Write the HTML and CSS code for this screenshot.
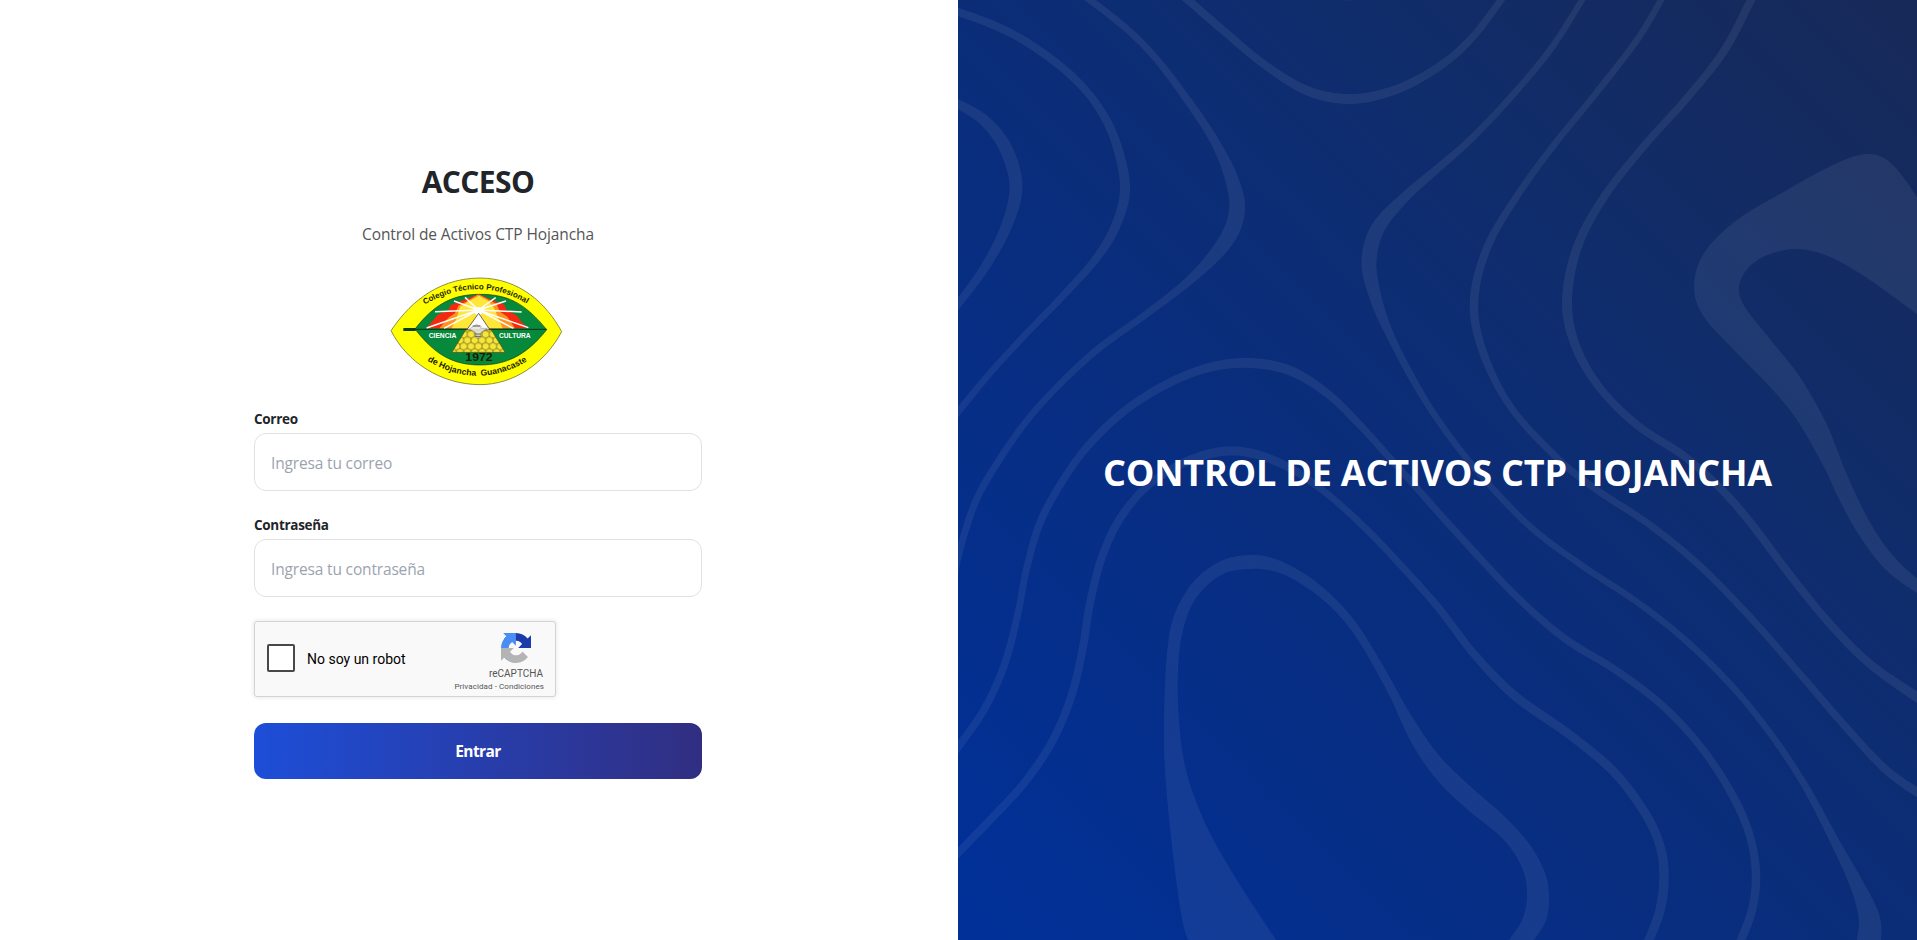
FILE: index.html
```html
<!DOCTYPE html>
<html lang="es">
<head>
<meta charset="utf-8">
<title>Acceso</title>
<link rel="stylesheet" href="styles.css">
</head>
<body>
<main class="page">
  <section class="access">
    <form class="form">
      <h1 class="form-title">ACCESO</h1>
      <p class="form-subtitle">Control de Activos CTP Hojancha</p>
      <svg class="crest" viewBox="0 0 570 390" role="img" aria-label="Colegio Técnico Profesional de Hojancha">
        <defs>
          <path id="arc-top" d="M134 119Q290 29 437 114L470 134"/>
          <path id="arc-bottom" d="M142 287Q292 377 440 289L470 270"/>
          <pattern id="comb" width="22" height="36" patternUnits="userSpaceOnUse" x="218" y="190">
            <rect width="22" height="36" fill="#f6e53a"/>
            <path d="M11 0V6L0 12V24L11 30V36M11 6L22 12V24L11 30" fill="none" stroke="#5c5310" stroke-width="2"/>
          </pattern>
          <clipPath id="leaf"><path d="M105 192C165 115 220 88 300 88C385 88 435 115 500 194C440 270 380 300 300 300C220 300 165 270 105 192Z"/></clipPath>
        </defs>
        <path d="M33 197C78 130 160 40 300 39C420 40 500 117 545 200C495 295 400 359 300 359C180 358 80 290 33 197Z" fill="#ffff00" stroke="#55552a" stroke-width="2"/>
        <path d="M105 192C165 115 220 88 300 88C385 88 435 115 500 194C440 270 380 300 300 300C220 300 165 270 105 192Z" fill="#07893b" stroke="#123d16" stroke-width="2"/>
        <g clip-path="url(#leaf)">
          <path d="M138 190L165 160 172 150 205 135 212 120 250 105 295 88 345 108 372 118 380 135 412 152 422 168 445 190Z" fill="#f42a10"/>
          <path d="M178 190L205 158 225 145 235 122 262 108 295 88 330 106 350 118 360 140 382 155 405 190Z" fill="#ff9420"/>
          <path d="M215 190L230 160 240 125 268 108 297 92 325 108 342 128 355 160 368 190Z" fill="#ffe73a"/>
        </g>
        <path d="M295 135L165 140M295 135L140 189M295 135L192 190M295 135L222 108M295 135L255 97M295 135L347 98M295 135L378 108M295 135L425 141M295 135L445 188M295 135L400 190" stroke="#fff" stroke-width="4.5"/>
        <circle cx="295" cy="138" r="12" fill="#fff"/>
        <path d="M70 189H107V198H70Z" fill="#063f1d"/>
        <path d="M105 193H500" stroke="#082f16" stroke-width="3"/>
        <path d="M296 145L330 195H260Z" fill="#fff" stroke="#222" stroke-width="2"/>
        <path d="M257 195H334L375 262H216Z" fill="url(#comb)" stroke="#594f10" stroke-width="2"/>
        <path d="M282 183Q290 174 297 183Q305 178 302 190L322 190 304 201 300 218H289L286 202L268 192Z" fill="#e4e4e0" fill-opacity=".85" stroke="#888" stroke-width="1.5"/>
        <path d="M278 183H300M284 207H303M286 214H302" stroke="#444" stroke-width="2.5"/>
        <g class="crest-text">
          <text font-size="19" fill="#fff" x="146" y="218" textLength="83" lengthAdjust="spacingAndGlyphs">CIENCIA</text>
          <text font-size="19" fill="#fff" x="357" y="218" textLength="95" lengthAdjust="spacingAndGlyphs">CULTURA</text>
          <text font-size="30" x="256" y="287" textLength="82" lengthAdjust="spacingAndGlyphs">1972</text>
          <text font-size="24"><textPath href="#arc-top">Colegio Técnico Profesional</textPath></text>
          <text font-size="26"><textPath href="#arc-bottom" xml:space="preserve">de Hojancha  Guanacaste</textPath></text>
        </g>
      </svg>
      <label class="label" for="email">Correo</label>
      <input class="input" id="email" type="email" placeholder="Ingresa tu correo">
      <label class="label label-second" for="password">Contraseña</label>
      <input class="input" id="password" type="password" placeholder="Ingresa tu contraseña">
      <div class="captcha">
        <span class="captcha-box"></span>
        <span class="captcha-label">No soy un robot</span>
        <div class="captcha-brand">
          <svg class="captcha-logo" viewBox="0 0 64 64">
            <path fill="#1c3aa9" d="M64 31.955l-.033-1.37V4.687l-7.16 7.16C50.948 4.674 42.033.093 32.05.093c-10.4 0-19.622 4.96-25.458 12.64l11.736 11.86a15.55 15.55 0 0 1 4.754-5.334c2.05-1.6 4.952-2.906 8.968-2.906.485 0 .86.057 1.135.163 4.976.393 9.288 3.14 11.828 7.124l-8.307 8.307L64 31.953"/>
            <path fill="#4a8df5" d="M31.862.094l-1.37.033H4.594l7.16 7.16C4.58 13.147 0 22.06 0 32.046c0 10.4 4.96 19.622 12.64 25.458L24.5 45.768a15.55 15.55 0 0 1-5.334-4.754c-1.6-2.05-2.906-4.952-2.906-8.968 0-.485.057-.86.163-1.135.393-4.976 3.14-9.288 7.124-11.828l8.307 8.307L31.86.095"/>
            <path fill="#b4b4b4" d="M.001 32.045l.033 1.37v25.898l7.16-7.16c5.86 7.173 14.774 11.754 24.76 11.754 10.4 0 19.622-4.96 25.458-12.64l-11.736-11.86a15.55 15.55 0 0 1-4.754 5.334c-2.05 1.6-4.952 2.906-8.968 2.906-.485 0-.86-.057-1.135-.163-4.976-.393-9.288-3.14-11.828-7.124l8.307-8.307-31.297.016"/>
          </svg>
          <span class="captcha-name">reCAPTCHA</span>
          <span class="captcha-links">Privacidad - Condiciones</span>
        </div>
      </div>
      <button class="submit" type="button">Entrar</button>
    </form>
  </section>
  <section class="hero">
    <svg class="contours" id="contours" viewBox="0 0 959 940" preserveAspectRatio="none" aria-hidden="true"></svg>
    <h2 class="hero-title">CONTROL DE ACTIVOS CTP HOJANCHA</h2>
  </section>
</main>
<script src="contours.js"></script>
</body>
</html>
```

FILE: styles.css
```css
* { box-sizing: border-box; }

body {
  margin: 0;
  font-family: "Open Sans", "Noto Sans", sans-serif;
  color: #212529;
  background: #fff;
}

.page {
  display: grid;
  grid-template-columns: 958px 1fr;
  height: 940px;
  overflow: hidden;
}

.access {
  display: flex;
  justify-content: center;
}

.form {
  display: flex;
  flex-direction: column;
  width: 448px;
  margin-right: 2px;
  padding-top: 158px;
}

.form-title {
  margin: 0;
  font-size: 30px;
  font-weight: 700;
  line-height: 48px;
  letter-spacing: -0.6px;
  text-align: center;
}

.form-subtitle {
  margin: 16px 0 0;
  font-size: 15.5px;
  line-height: 25px;
  letter-spacing: -0.1px;
  text-align: center;
  color: #555;
}

.crest {
  display: block;
  width: 190px;
  height: 130px;
  margin: 18px 0 0 126px;
}

.crest-text {
  font-family: "Liberation Sans", Arial, sans-serif;
  font-weight: 700;
  fill: #1c1c00;
}

.label {
  margin-top: 14px;
  font-size: 13.5px;
  font-weight: 700;
  line-height: 20px;
  letter-spacing: -0.3px;
}

.label-second { margin-top: 24px; }

.input {
  width: 100%;
  height: 58px;
  margin: 4px 0 0;
  padding: 1px 16px 0;
  border: 1px solid #dfe1e6;
  border-radius: 12px;
  font: inherit;
  font-size: 15.5px;
  letter-spacing: -0.16px;
  background: #fff;
}

.input::placeholder {
  color: #9ca3af;
  opacity: 1;
}

.captcha {
  display: flex;
  align-items: center;
  width: 302px;
  height: 76px;
  margin-top: 24px;
  padding-left: 12px;
  border: 1px solid #d3d3d3;
  border-radius: 3px;
  background: #f9f9f9;
  box-shadow: 0 0 4px 1px rgba(0, 0, 0, 0.08);
  font-family: Roboto, sans-serif;
}

.captcha-box {
  width: 28px;
  height: 28px;
  margin-bottom: 2px;
  border: 2px solid #484848;
  border-radius: 2px;
  background: #fff;
}

.captcha-label {
  flex: 1;
  margin-left: 12px;
  font-size: 14px;
  line-height: 17px;
  color: #000;
}

.captcha-brand {
  display: flex;
  flex-direction: column;
  align-items: flex-end;
  width: 100px;
  height: 74px;
  padding: 11px 11px 0 0;
  color: #555;
}

.captcha-logo {
  width: 30px;
  height: 30px;
  margin-right: 13px;
}

.captcha-name {
  margin: 5px 1px 0 0;
  font-size: 10px;
  line-height: 12px;
}

.captcha-links {
  margin-top: 2px;
  font-size: 8px;
  line-height: 10px;
  letter-spacing: 0.08px;
  white-space: nowrap;
}

.submit {
  width: 100%;
  height: 56px;
  margin-top: 26px;
  border: 0;
  border-radius: 12px;
  font: inherit;
  font-size: 15.5px;
  font-weight: 700;
  letter-spacing: -0.6px;
  color: #fff;
  background: linear-gradient(to right, #1d4ed8, #312e81);
}

.hero {
  position: relative;
  display: flex;
  align-items: center;
  justify-content: center;
  background: linear-gradient(45deg, #003099 0%, #0b2d78 50%, #112c67 75%, #172958 100%);
}

.contours {
  position: absolute;
  inset: 0;
  width: 100%;
  height: 100%;
  fill: #fff;
  fill-opacity: 0.065;
}

.hero-title {
  position: relative;
  margin: 6px 0 0;
  font-size: 36px;
  font-weight: 700;
  line-height: 54px;
  letter-spacing: -0.2px;
  white-space: nowrap;
  color: #fff;
}
```

FILE: contours.js
```js
// Contour lines: centre points with a band width, [x, y, width].
const bands = [
  [[-20,6,8],[0,12,8],[33,24,8],[67,41,8],[107,70,8],[137,102,8],[157,140,9],[167,187,10],[158,225,9.5],[137,260,8],[100,301,7],[67,335,6.5],[33,372,6.5],[0,412,7],[-15,432,7]],
  [[-15,97,8],[0,104,9],[27,121,11],[48,149,13],[58,187,13],[48,227,11],[27,267,9],[0,304,8],[-15,322,8]],
  [[110,-15,7],[132,0,7],[170,30,7],[200,61,7],[233,105,8],[257,142,9],[273,177,13],[279,210,16],[267,242,15],[233,279,9],[187,315,7],[140,349,7],[100,386,6.5],[67,423,6.5],[38,465,7],[17,503,7],[1,553,7],[-6,590,7]],
  [[215,-12,8],[230,0,8],[267,32,8],[307,65,8],[350,91,9.5],[393,99,10],[437,90,9],[479,68,8],[512,40,7.5],[543,0,7],[552,-15,7]],
  [[370,-8,8],[390,-3.5,8],[410,-8,8]],
  [[632,-14,6],[624,0,6],[592,50,6.5],[552,98,6.5],[512,140,7],[479,169,8],[447,197,10],[420,228,14],[411,262,15],[418,299,12],[433,337,8],[457,383,7],[480,420,6.5],[506,455,6.5],[536,490,6.5],[576,530,6.5],[626,567,6.5],[679,602,6.5],[726,639,6.5],[772,684,6.5],[812,733,6.5],[846,784,7],[876,840,9],[899,885,14],[911,917,21],[911,940,24],[908,965,25]],
  [[711,-15,6.5],[703,0,6.5],[679,40,6.5],[639,92,6.5],[596,145,6.5],[559,196,7],[529,248,8],[516,302,8.5],[525,352,8],[552,406,7],[596,455,7],[636,488,7],[692,525,7],[742,566,7],[792,617,7],[842,674,7],[886,725,7.5],[926,768,8],[959,792,9],[980,802,9]],
  [[801,-15,8],[793,0,8],[766,51,8],[729,98,7.5],[686,146,7.5],[646,197,8],[619,248,9],[609,302,10],[618,347,9],[642,388,8],[679,425,8],[726,456,8],[762,488,8],[792,522,8],[832,575,8],[872,624,8],[912,664,8.5],[959,697,10],[980,708,10]],
  [[-15,868,9],[0,853,8],[33,819,8],[67,782,8],[95,740,8],[114,694,8],[125,647,8],[132,603,8],[144,557,8],[163,517,8],[193,483,8],[235,459,9],[278,451,9],[322,463,8.5],[363,489,7],[403,524,7],[437,559,7],[479,606,7.5],[516,654,8],[557,696,9],[612,735,9],[656,772,9],[687,813,9],[702,846,9],[706,877,9.5],[702,910,9.5],[691,940,9],[682,960,9]],
  [[-15,765,8],[0,747,8],[27,708,7.5],[47,663,7.5],[60,613,7],[69,567,7],[84,518,7.5],[113,468,7.5],[140,435,8],[173,406,8],[213,382,8.5],[253,367,9],[293,363,10],[333,371,9.5],[370,394,8],[400,423,7.5],[430,456,7],[457,486,7],[479,511,7],[519,555,7],[559,597,7],[606,638,7.5],[659,671,7.5],[706,707,7.5],[746,751,7.5],[777,800,8],[793,840,8],[798,877,8.5],[794,910,8.5],[783,940,8.5],[774,960,8.5]]
];

// Closed shapes: outline points.
const shapes = [
  [[975,224],[959,197],[934,164],[911,154],[879,163],[829,190],[779,220],[746,253],[736,287],[746,317],[776,350],[812,387],[839,420],[866,467],[879,495],[899,532],[926,568],[959,593],[990,610],[990,592],[959,578],[932,552],[909,517],[887,470],[869,425],[842,377],[812,339],[787,307],[781,287],[791,267],[812,254],[841,249],[872,257],[909,278],[959,314],[990,335]],
  [[245,965],[230,940],[222,907],[213,837],[207,770],[206,720],[209,653],[217,613],[237,580],[263,561],[292,555],[320,560],[357,581],[393,616],[423,662],[450,710],[479,753],[512,786],[546,816],[572,845],[587,873],[591,897],[588,920],[576,940],[560,960],[535,960],[551,940],[564,920],[569,897],[565,870],[546,840],[510,810],[479,780],[453,742],[430,693],[400,640],[373,607],[340,582],[315,571],[290,569],[263,575],[238,598],[225,630],[220,670],[221,720],[228,770],[247,823],[277,877],[318,940],[335,965]]
];

function spline(a, b, c, d, t) {
  return 0.5 * (2 * b + (c - a) * t + (2 * a - 5 * b + 4 * c - d) * t * t + (3 * b - a - 3 * c + d) * t * t * t);
}

function sample(points) {
  const out = [];
  for (let i = 0; i < points.length - 1; i++) {
    const p = [points[Math.max(i - 1, 0)], points[i], points[i + 1], points[Math.min(i + 2, points.length - 1)]];
    for (let s = 0; s < 12; s++) {
      out.push(p[1].map((_, k) => spline(p[0][k], p[1][k], p[2][k], p[3][k], s / 12)));
    }
  }
  out.push(points[points.length - 1]);
  return out;
}

function bandOutline(points) {
  const line = sample(points);
  const left = [];
  const right = [];
  line.forEach(([x, y, w], i) => {
    const a = line[Math.max(i - 1, 0)];
    const b = line[Math.min(i + 1, line.length - 1)];
    const len = Math.hypot(b[0] - a[0], b[1] - a[1]) || 1;
    const nx = -(b[1] - a[1]) / len * w / 2;
    const ny = (b[0] - a[0]) / len * w / 2;
    left.push([x + nx, y + ny]);
    right.unshift([x - nx, y - ny]);
  });
  return left.concat(right);
}

const svg = document.getElementById("contours");
[...bands.map(bandOutline), ...shapes.map(sample)].forEach((outline) => {
  const path = document.createElementNS("http://www.w3.org/2000/svg", "path");
  path.setAttribute("d", "M" + outline.map(([x, y]) => x.toFixed(1) + " " + y.toFixed(1)).join("L") + "Z");
  svg.appendChild(path);
});
```
